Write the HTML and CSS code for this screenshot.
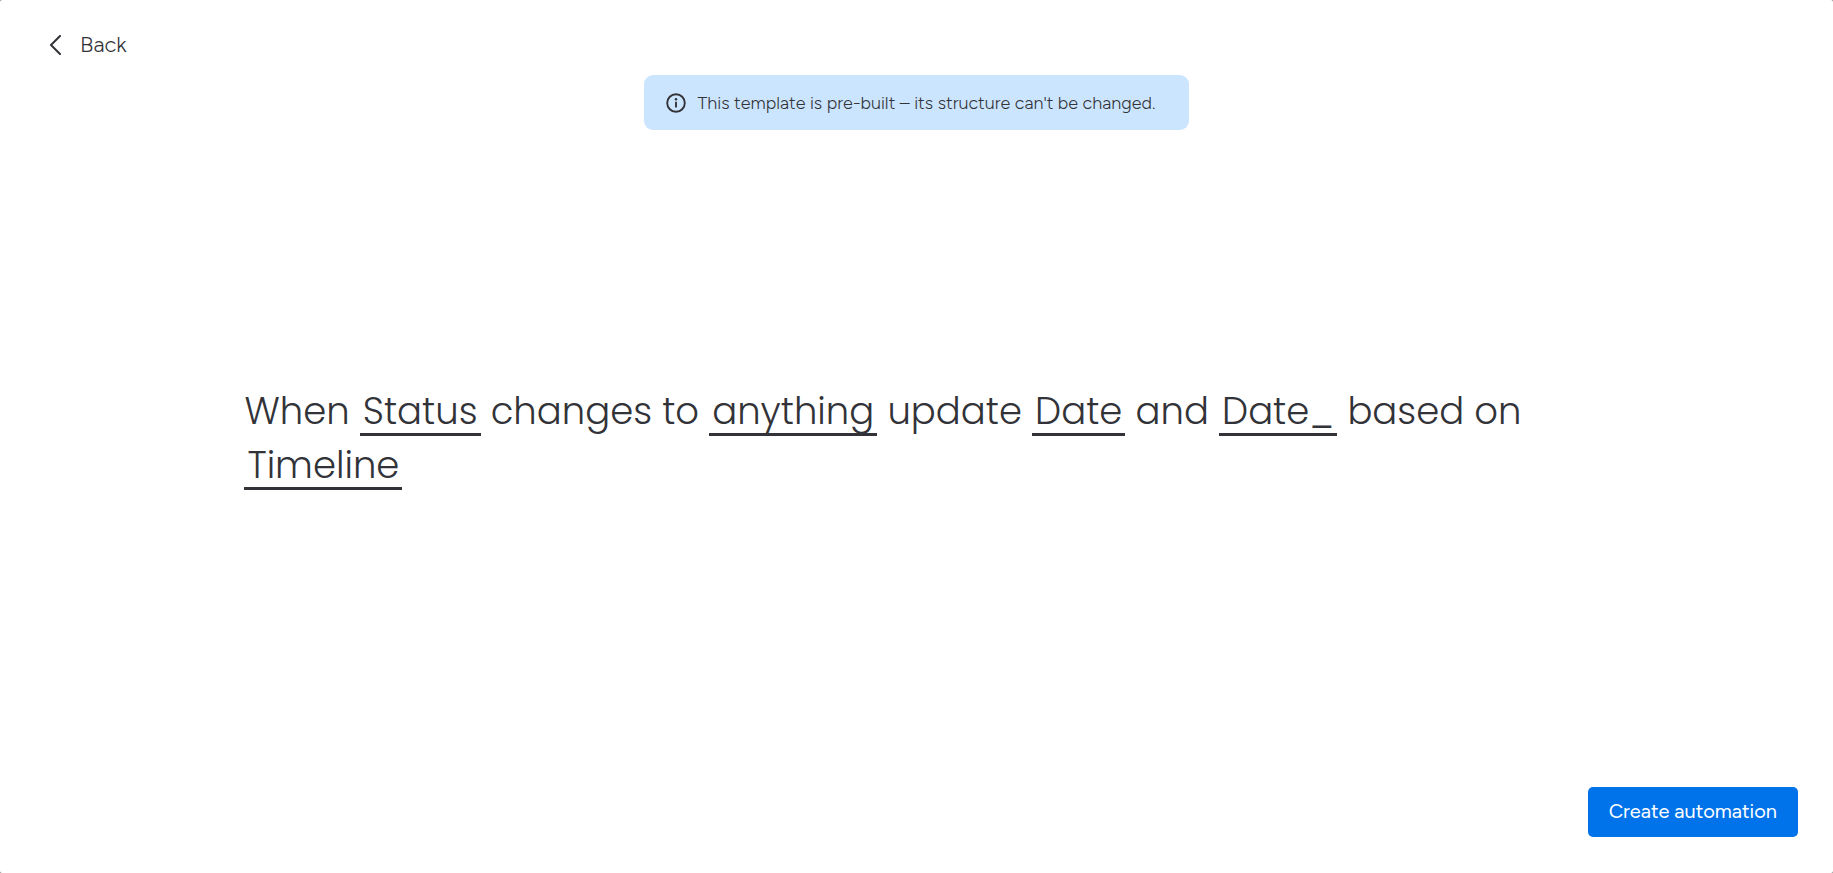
FILE: index.html
```html
<!DOCTYPE html>
<html lang="en">
<head>
<meta charset="utf-8">
<title>Create automation</title>
<link rel="stylesheet" href="styles.css">
</head>
<body>
<div class="dialog">
  <header class="header">
    <button class="back" type="button">
      <svg class="back-icon" viewBox="0 0 12 20" aria-hidden="true"><path d="M10.500 1L1.500 10L10.500 19" fill="none" stroke="currentColor" stroke-width="2" stroke-linecap="round" stroke-linejoin="round"/></svg>
      Back
    </button>
    <div class="notice" role="status">
      <svg class="notice-icon" viewBox="0 0 20 20" aria-hidden="true"><circle cx="10" cy="10" r="8.800" fill="none" stroke="currentColor" stroke-width="1.900"/><circle cx="10" cy="6.200" r="1.250" fill="currentColor"/><path d="M10 9.500v4.300" stroke="currentColor" stroke-width="1.900" stroke-linecap="round"/></svg>
      <span>This template is pre-built – its structure can't be changed.</span>
    </div>
  </header>
  <main class="recipe">
    <p class="sentence">When <button class="field" type="button">Status</button> changes to <button class="field" type="button">anything</button> update <button class="field" type="button">Date</button> and <button class="field" type="button">Date_</button> based on <button class="field" type="button">Timeline</button></p>
  </main>
  <footer class="footer">
    <button class="create" type="button">Create automation</button>
  </footer>
</div>
</body>
</html>
```
FILE: styles.css
```css
* { box-sizing: border-box; }
body {
  margin: 0;
  background: #808080;
  color: #323338;
  font-family: Figtree, Inter, "Liberation Sans", sans-serif;
}
button { font: inherit; color: inherit; background: none; border: 0; padding: 0; cursor: pointer; }
.dialog {
  min-height: 100vh;
  display: flex;
  flex-direction: column;
  background: #fff;
  border-radius: 2px;
}
.header { display: flex; flex-direction: column; padding: 30px 49px 0; }
.back {
  display: flex;
  align-items: center;
  align-self: flex-start;
  gap: 18px;
  font-size: 22px;
  font-weight: 300;
  line-height: 30px;
}
.back-icon { width: 13px; height: 20px; }
.notice {
  align-self: center;
  display: flex;
  align-items: center;
  gap: 12px;
  margin-top: 15px;
  padding: 15px 34px 14px 22px;
  border-radius: 9px;
  background: #cce5ff;
  font-size: 18px;
  font-weight: 300;
  line-height: 26px;
}
.notice-icon { width: 20px; height: 20px; }
.recipe {
  flex: 1;
  display: flex;
  flex-direction: column;
  justify-content: center;
  padding: 0 13.333% 41px;
}
.sentence {
  margin: 0;
  font-family: Poppins, Inter, "Liberation Sans", sans-serif;
  font-size: 37px;
  font-weight: 300;
  line-height: 54px;
}
.field {
  padding: 0 3px;
  line-height: 43px;
  border-bottom: 3px solid #323338;
}
.footer { display: flex; justify-content: flex-end; padding: 0 35px 36px; }
.create {
  height: 50px;
  padding: 0 21px 2px;
  border-radius: 5px;
  background: #0073ea;
  color: #fff;
  font-size: 20px;
  line-height: 30px;
}
```
